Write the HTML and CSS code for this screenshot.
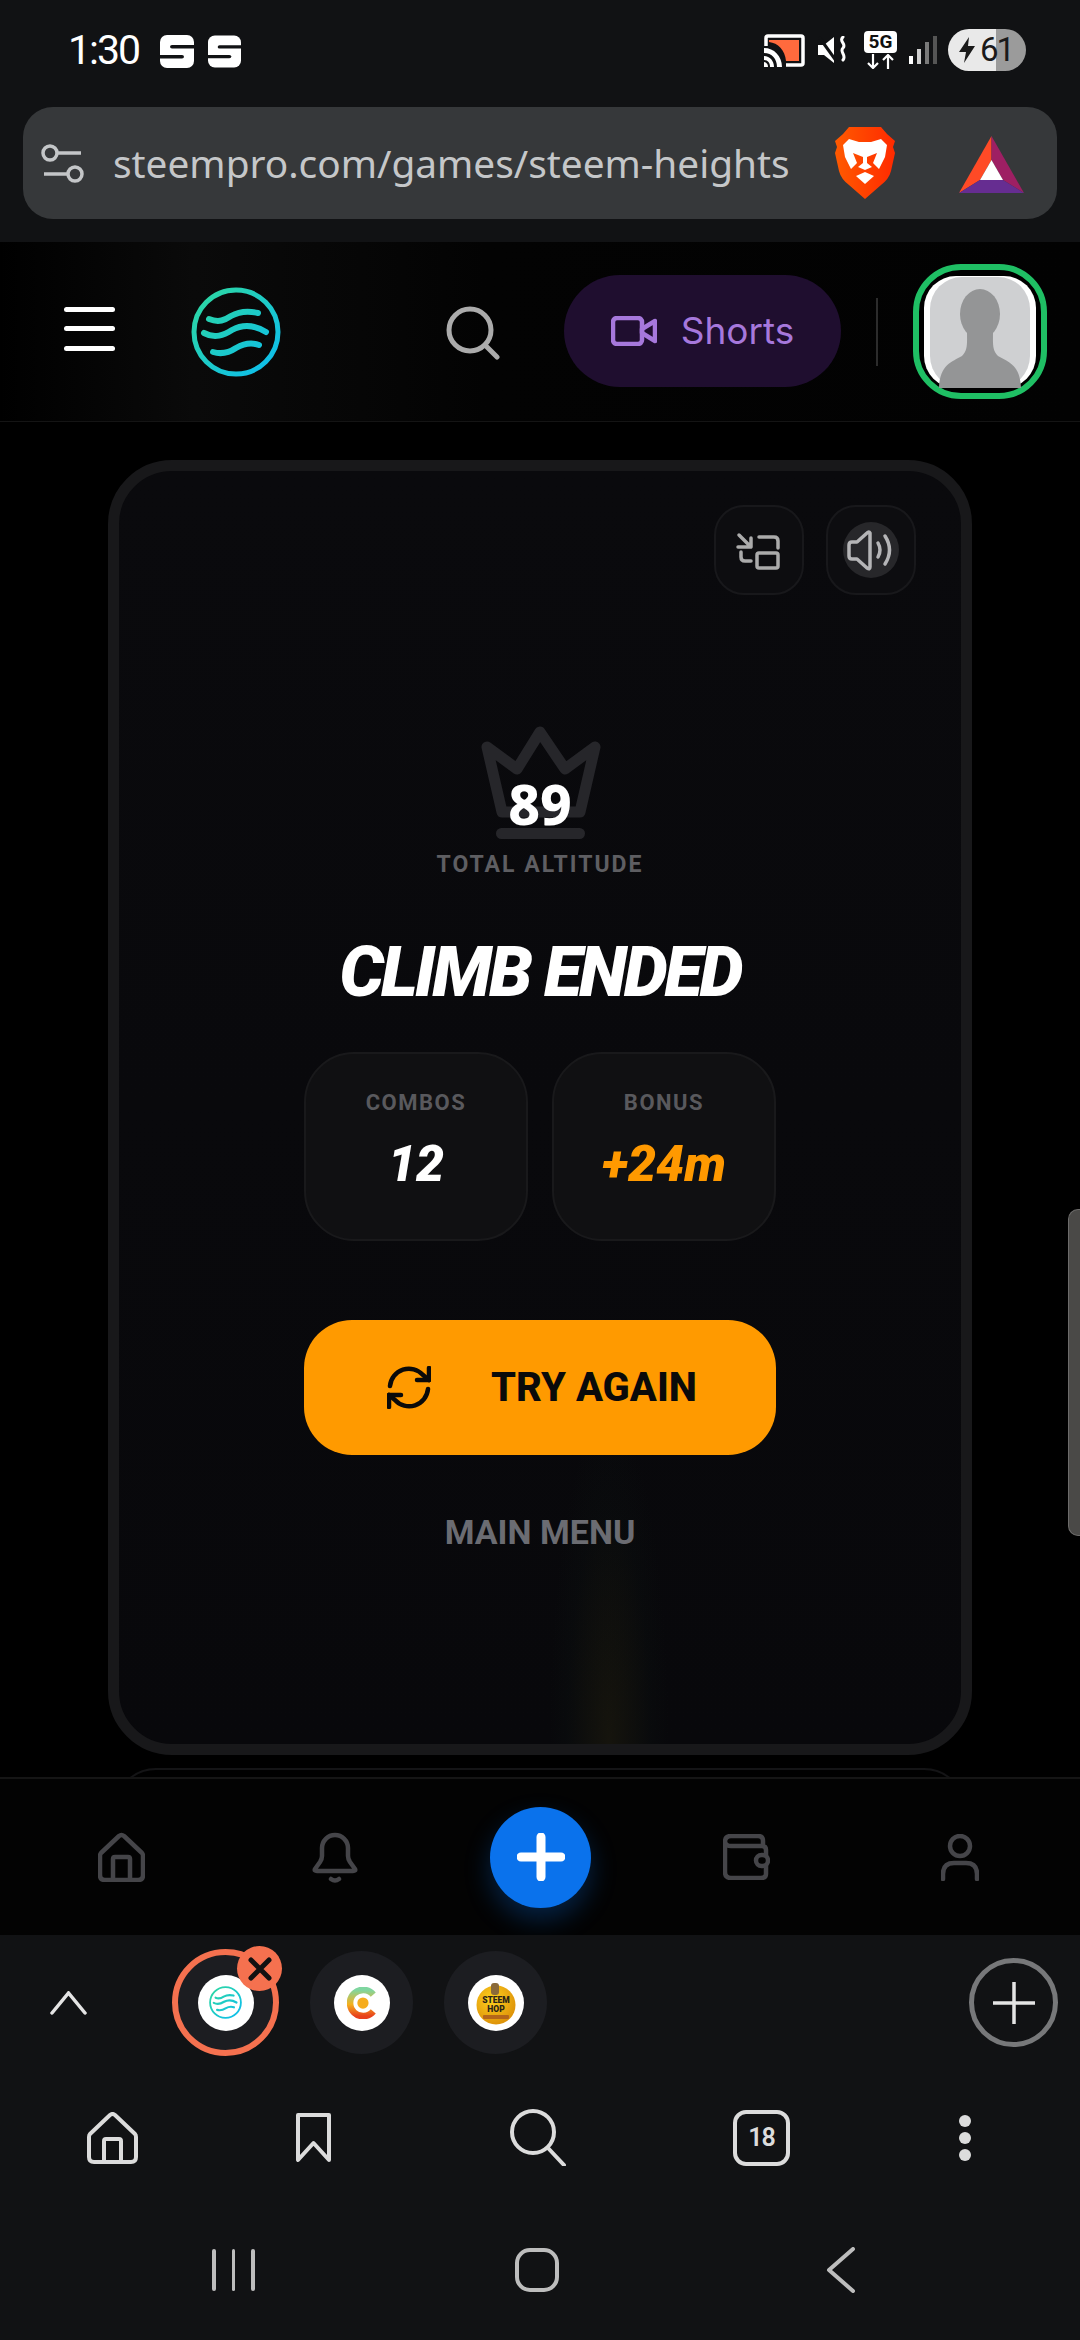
FILE: index.html
```html
<!DOCTYPE html>
<html lang="en">
<head>
<meta charset="utf-8">
<title>Steem Heights</title>
<link rel="stylesheet" href="styles.css">
</head>
<body>
<svg class="defs" width="0" height="0" aria-hidden="true">
  <defs>
    <linearGradient id="tealGradU" gradientUnits="userSpaceOnUse" x1="5" y1="5" x2="85" y2="85">
      <stop offset="0" stop-color="#2ed8a0"/>
      <stop offset="1" stop-color="#0cbdf0"/>
    </linearGradient>
    <linearGradient id="ringGrad" x1="0" y1="0" x2="0" y2="1">
      <stop offset="0" stop-color="#7fd6a0"/>
      <stop offset=".55" stop-color="#f4b11e"/>
      <stop offset="1" stop-color="#e8411c"/>
    </linearGradient>
    <linearGradient id="braveGrad" x1="0" y1="0" x2="1" y2="0">
      <stop offset="0" stop-color="#ff5a00"/>
      <stop offset="1" stop-color="#ff2a00"/>
    </linearGradient>
    <radialGradient id="hopGrad" cx=".4" cy=".35" r=".75">
      <stop offset="0" stop-color="#ffd21f"/>
      <stop offset="1" stop-color="#d98a06"/>
    </radialGradient>
    <symbol id="waveLogo" viewBox="0 0 90 90">
      <circle cx="45" cy="45" r="42" fill="none" stroke="url(#tealGradU)" stroke-width="5"/>
      <g fill="none" stroke="url(#tealGradU)" stroke-width="6" stroke-linecap="round">
        <path d="M18 32C28 36 34 33 40 29C47 25 55 23 67 26"/>
        <path d="M13 46C24 52 33 48 41 43C50 38 62 37 75 45"/>
        <path d="M22 65C32 68 39 65 45 61C52 57 60 55 68 58"/>
      </g>
    </symbol>
    <symbol id="steemS" viewBox="0 0 34 33">
      <rect width="34" height="33" rx="7" fill="#fff"/>
      <path d="M12 10H34V13.500H12Q10 13.500 10 11.750Q10 10 12 10Z" fill="#111214"/>
      <path d="M0 20H22Q24 20 24 21.750Q24 23.500 22 23.500H0Z" fill="#111214"/>
    </symbol>
  </defs>
</svg>

<div class="screen">
  <section class="browser-top">
    <div class="status">
      <span class="clock">1:30</span>
      <svg class="s-badge" width="34" height="33"><use href="#steemS"/></svg>
      <svg class="s-badge s-second" width="33" height="33"><use href="#steemS"/></svg>
      <div class="status-icons">
        <svg class="ic-cast" width="41" height="33" viewBox="0 0 41 33">
          <path d="M2 12V4Q2 2 4 2H37Q39 2 39 4V29Q39 31 37 31H22" fill="none" stroke="#fff" stroke-width="3.500"/>
          <path d="M5 6H35V27H22C21 16 14 9 5 8Z" fill="#ff6a3d"/>
          <path d="M0 14C10 14 18 22 18 33H13C13 25 8 19 0 19ZM0 22C6 22 10 27 10 33H6C6 29 4 26 0 26ZM0 28A5 5 0 0 1 4 33H0Z" fill="#fff"/>
        </svg>
        <svg class="ic-mute" width="30" height="28" viewBox="0 0 30 28">
          <path d="M0 9H6L16 1V27L6 19H0Z" fill="#fff"/>
          <path d="M1 1L19 26" stroke="#111214" stroke-width="3"/>
          <path d="M25 1C20 5 29 8 25 12C21 16 29 19 25 24" fill="none" stroke="#fff" stroke-width="3" stroke-linecap="round"/>
        </svg>
        <div class="ic-net">
          <span class="net-label">5G</span>
          <svg width="33" height="15" viewBox="0 0 33 15">
            <path d="M9 0V14M4 9L9 14L14 9M24 15V1M19 6L24 1L29 6" fill="none" stroke="#fff" stroke-width="2.200"/>
          </svg>
        </div>
        <div class="ic-signal">
          <i class="bar b1"></i><i class="bar b2"></i><i class="bar b3"></i><i class="bar b4"></i>
        </div>
        <div class="battery">
          <svg width="18" height="26" viewBox="0 0 18 26"><path d="M11 0L1 15H8L6 26L17 9H10Z" fill="#1a1a1a"/></svg>
          <span class="batt-num">61</span>
        </div>
      </div>
    </div>
    <div class="urlbar">
      <svg class="url-tune" width="43" height="39" viewBox="0 0 43 39">
        <g fill="none" stroke="#c4c6c8" stroke-width="3.500">
          <circle cx="9" cy="9" r="7"/><path d="M16 9H40"/>
          <circle cx="34" cy="30" r="7"/><path d="M3 30H27"/>
        </g>
      </svg>
      <span class="url-text">steempro.com/games/steem-heights</span>
      <svg class="brave" width="60" height="72" viewBox="0 0 60 72">
        <path d="M14 0H46L52 7L60 14L58 20L60 26L56 44Q54 52 46 58L30 72L14 58Q6 52 4 44L0 26L2 20L0 14L8 7Z" fill="url(#braveGrad)"/>
        <path d="M8 18L14 12L24 15H36L46 12L52 18L50 30L44 42L38 36L42 26L32 30V36L37 40L30 43L23 40L28 36V30L18 26L22 36L16 42L10 30Z" fill="#fff"/>
        <path d="M21 49L30 45L39 49L30 57Z" fill="#fff"/>
      </svg>
      <svg class="bat" width="65" height="57" viewBox="0 0 65 57">
        <path d="M32.500 0L0 57L21 44L32.500 24Z" fill="#ff4a26"/>
        <path d="M32.500 0L65 57L44 44L32.500 24Z" fill="#9e1f63"/>
        <path d="M0 57H65L44 44H21Z" fill="#662d91"/>
        <path d="M32.500 24L44 44H21Z" fill="#fff"/>
      </svg>
    </div>
  </section>

  <header class="app-header">
    <div class="burger"><i></i><i></i><i></i></div>
    <svg class="logo" width="90" height="90"><use href="#waveLogo"/></svg>
    <svg class="head-search" width="54" height="54" viewBox="0 0 54 54">
      <circle cx="24" cy="24" r="21" fill="none" stroke="#ababab" stroke-width="5"/>
      <path d="M39 39L51 51" stroke="#ababab" stroke-width="5" stroke-linecap="round"/>
    </svg>
    <div class="shorts">
      <svg width="46" height="30" viewBox="0 0 46 30">
        <rect x="2" y="2" width="29" height="26" rx="4" fill="none" stroke="#a678dc" stroke-width="4.500"/>
        <path d="M31 13L44 5V25L31 17Z" fill="none" stroke="#a678dc" stroke-width="4.500" stroke-linejoin="round"/>
      </svg>
      <span>Shorts</span>
    </div>
    <i class="divider"></i>
    <div class="avatar">
      <svg width="112" height="112" viewBox="0 0 112 112">
        <rect width="112" height="112" rx="32" fill="#fff"/>
        <rect x="6" y="1" width="100" height="111" rx="32" fill="#cfd0d2"/>
        <ellipse cx="56" cy="38" rx="20" ry="25" fill="#949596"/>
        <path d="M43 55C43 68 44 74 38 80C28 86 16 88 15 112H97C96 88 84 86 74 80C68 74 69 68 69 55Z" fill="#949596"/>
      </svg>
    </div>
  </header>

  <main class="feed">
    <article class="game-card">
      <div class="card-tools">
        <button class="tool">
          <svg width="90" height="90" viewBox="0 0 90 90">
            <g fill="none" stroke="#ababab" stroke-width="3.500" stroke-linecap="round" stroke-linejoin="round">
              <path d="M25 30L37 42M24 42H37V33"/>
              <path d="M45 32H60Q64 32 64 36V43"/>
              <path d="M27 47V52Q27 56 31 56H37"/>
              <rect x="43" y="48" width="21" height="15" rx="2"/>
            </g>
          </svg>
        </button>
        <button class="tool tool-on">
          <svg width="90" height="90" viewBox="0 0 90 90">
            <circle cx="45" cy="45" r="28" fill="#27272a"/>
            <g fill="none" stroke="#b5b5b7" stroke-width="3.500" stroke-linecap="round" stroke-linejoin="round">
              <path d="M44 28Q43 26 41 28L31 37H26Q23 37 23 40V51Q23 54 26 54H31L41 63Q44 65 44 62Z"/>
              <path d="M52 38Q56 45 52 52"/>
              <path d="M59 31Q68 45 59 59"/>
            </g>
          </svg>
        </button>
      </div>

      <div class="score">
        <svg width="123" height="113" viewBox="0 0 123 113">
          <path d="M8 21L38 43L61 6L86 43L116 21L101 86H23Z" fill="none" stroke="#26262a" stroke-width="11" stroke-linejoin="round"/>
          <rect x="17" y="102" width="89" height="11" rx="5.500" fill="#26262a"/>
        </svg>
        <span class="score-num">89</span>
      </div>
      <p class="score-label">TOTAL ALTITUDE</p>
      <h1 class="title">CLIMB ENDED</h1>

      <div class="stats">
        <div class="stat">
          <span class="stat-label">COMBOS</span>
          <span class="stat-value">12</span>
        </div>
        <div class="stat">
          <span class="stat-label">BONUS</span>
          <span class="stat-value orange">+24m</span>
        </div>
      </div>

      <button class="retry">
        <svg width="44" height="43" viewBox="0 0 44 43">
          <g fill="none" stroke="#0a0a0a" stroke-width="4.500" stroke-linecap="round" stroke-linejoin="round">
            <path d="M3 20A19 19 0 0 1 36 9L42 14"/>
            <path d="M42 2V14H30"/>
            <path d="M41 23A19 19 0 0 1 8 34L2 29"/>
            <path d="M2 41V29H14"/>
          </g>
        </svg>
        <span>TRY AGAIN</span>
      </button>
      <a class="menu-link">MAIN MENU</a>
    </article>
    <div class="next-card"></div>
    <div class="scroll-handle"></div>
  </main>

  <nav class="app-nav">
    <svg class="n-home" width="47" height="50" viewBox="0 0 47 50">
      <g fill="none" stroke="#454549" stroke-width="4.500" stroke-linejoin="round">
        <path d="M3 21L21 4Q23.500 2 26 4L44 21Q45 22 45 24V43Q45 48 40 48H7Q2 48 2 43V24Q2 22 3 21Z"/>
        <path d="M15 48V27Q15 25 17 25H30Q32 25 32 27V48"/>
      </g>
    </svg>
    <svg class="n-bell" width="46" height="51" viewBox="0 0 46 51">
      <g fill="none" stroke="#454549" stroke-width="4.500" stroke-linecap="round" stroke-linejoin="round">
        <path d="M3 37Q2 39 5 39H41Q44 39 43 37L38 30Q36 27 36 24V16A13 13 0 0 0 10 16V24Q10 27 8 30Z"/>
        <path d="M19 47Q23 50 27 47"/>
      </g>
    </svg>
    <button class="fab">
      <svg width="48" height="48" viewBox="0 0 48 48"><path d="M24 4V44M4 24H44" stroke="#fff" stroke-width="9" stroke-linecap="round"/></svg>
    </button>
    <svg class="n-wallet" width="47" height="46" viewBox="0 0 47 46">
      <g fill="none" stroke="#454549" stroke-width="4.500" stroke-linejoin="round">
        <path d="M40 12V7Q40 2 35 2H8Q2 2 2 8V38Q2 44 8 44H38Q43 44 43 40V16Q43 12 39 12H8Q3 12 2 8"/>
        <rect x="33" y="21" width="12" height="11" rx="5.500" fill="#030303"/>
      </g>
    </svg>
    <svg class="n-user" width="38" height="47" viewBox="0 0 38 47">
      <g fill="none" stroke="#454549" stroke-width="4.500" stroke-linecap="round">
        <circle cx="19" cy="12" r="10"/>
        <path d="M2 45V40Q2 29 13 29H25Q36 29 36 40V45"/>
      </g>
    </svg>
  </nav>

  <section class="browser-bottom">
    <div class="tabstrip">
      <svg class="chev" width="37" height="24" viewBox="0 0 37 24"><path d="M2 22L18.500 2L35 22" fill="none" stroke="#e4e4e4" stroke-width="3.500" stroke-linecap="round"/></svg>
      <div class="tab tab-active">
        <span class="tab-face"><svg width="33" height="33"><use href="#waveLogo"/></svg></span>
        <span class="tab-close">
          <svg width="24" height="24" viewBox="0 0 24 24"><path d="M3 3L21 21M21 3L3 21" stroke="#111" stroke-width="5" stroke-linecap="round"/></svg>
        </span>
      </div>
      <div class="tab">
        <span class="tab-face">
          <svg width="30" height="32" viewBox="0 0 32 34">
            <path d="M28 8A14 14 0 1 0 28 26" fill="none" stroke="url(#ringGrad)" stroke-width="7"/>
            <circle cx="17" cy="17" r="6" fill="#f6ad1e"/>
          </svg>
        </span>
      </div>
      <div class="tab">
        <span class="tab-face">
          <svg width="40" height="44" viewBox="0 0 40 44">
            <circle cx="20" cy="24" r="19.500" fill="url(#hopGrad)"/>
            <rect x="15" y="2" width="8" height="12" rx="3" fill="#8a6a3a"/>
            <text class="hop-text" x="20" y="22" text-anchor="middle">STEEM</text>
            <text class="hop-text" x="20" y="31" text-anchor="middle">HOP</text>
            <rect x="7" y="34" width="26" height="4" rx="1" fill="#b5661a"/>
          </svg>
        </span>
      </div>
      <div class="tab-add">
        <svg width="42" height="42" viewBox="0 0 42 42"><path d="M21 0V42M0 21H42" stroke="#e4e4e4" stroke-width="3.500"/></svg>
      </div>
    </div>

    <div class="toolbar">
      <svg class="t-home" width="51" height="52" viewBox="0 0 51 52">
        <g fill="none" stroke="#dcdcdc" stroke-width="4" stroke-linejoin="round">
          <path d="M3 22L23 3Q25.500 1 28 3L48 22Q49 23 49 25V45Q49 50 44 50H7Q2 50 2 45V25Q2 23 3 22Z"/>
          <path d="M17 50V29Q17 27 19 27H32Q34 27 34 29V50"/>
        </g>
      </svg>
      <svg class="t-mark" width="35" height="50" viewBox="0 0 35 50">
        <path d="M2 2H33V47L17.500 30L2 47Z" fill="none" stroke="#dcdcdc" stroke-width="4" stroke-linejoin="round"/>
      </svg>
      <svg class="t-search" width="56" height="57" viewBox="0 0 56 57">
        <circle cx="23" cy="23" r="21" fill="none" stroke="#dcdcdc" stroke-width="4"/>
        <path d="M38 39L54 56" stroke="#dcdcdc" stroke-width="4" stroke-linecap="round"/>
      </svg>
      <span class="t-count">18</span>
      <span class="t-dots"><i></i><i></i><i></i></span>
    </div>

    <div class="sysnav">
      <span class="sys-recent"><i></i><i></i><i></i></span>
      <span class="sys-home"></span>
      <svg class="sys-back" width="30" height="46" viewBox="0 0 30 46"><path d="M27 2L3 23L27 44" fill="none" stroke="#bdbdbd" stroke-width="4" stroke-linecap="round" stroke-linejoin="round"/></svg>
    </div>
  </section>
</div>
</body>
</html>
```

FILE: styles.css
```css
* { box-sizing: border-box; }
html, body { margin: 0; padding: 0; background: #000; }
.defs { position: absolute; }
i { display: block; }
svg { display: block; flex: none; }
button { border: 0; padding: 0; background: none; font: inherit; }

.screen {
  width: 1080px;
  height: 2340px;
  display: flex;
  flex-direction: column;
  overflow: hidden;
  font-family: Roboto, "Liberation Sans", sans-serif;
  position: relative;
}

/* browser chrome, top */
.browser-top { height: 242px; background: #111214; flex: none; }
.status {
  height: 107px;
  padding: 0 54px 7px 68px;
  display: flex;
  align-items: center;
  color: #fff;
}
.clock { font-size: 41px; font-weight: 400; letter-spacing: -2px; width: 92px; }
.s-badge { margin-top: 3px; }
.s-second { margin-left: 14px; }
.status-icons { margin-left: auto; display: flex; align-items: center; }
.ic-cast { margin-right: 13px; }
.ic-mute { margin-right: 16px; }
.ic-net { width: 33px; margin-right: 12px; }
.net-label {
  display: block;
  height: 22px;
  border-radius: 4px;
  background: #fff;
  color: #111;
  font-size: 19px;
  font-weight: 700;
  line-height: 22px;
  text-align: center;
  margin-bottom: 1px;
}
.ic-signal { display: flex; align-items: flex-end; gap: 4px; height: 28px; width: 28px; margin-right: 11px; }
.bar { width: 4px; }
.b1 { height: 8px; background: #fff; }
.b2 { height: 15px; background: #cfcfcf; }
.b3 { height: 22px; background: #7a7a7a; }
.b4 { height: 28px; background: #555; }
.battery {
  width: 78px;
  height: 42px;
  border-radius: 21px;
  background: linear-gradient(90deg, #e9e9e9 0 61.500%, #9b9b9b 61.500% 100%);
  display: flex;
  align-items: center;
  padding-left: 10px;
  gap: 4px;
}
.batt-num { font-size: 33px; color: #1a1a1a; letter-spacing: -2px; line-height: 42px; }

.urlbar {
  height: 112px;
  margin: 0 23px;
  padding: 0 33px 0 18px;
  border-radius: 30px;
  background: #36383a;
  display: flex;
  align-items: center;
}
.url-text {
  margin-left: 29px;
  font-family: "Noto Sans", sans-serif;
  font-size: 38.800px;
  color: #c5c7c9;
  white-space: nowrap;
}
.brave { margin-left: auto; margin-right: -1px; }
.bat { margin-left: 65px; margin-top: 3px; }

/* site header */
.app-header {
  height: 180px;
  flex: none;
  background: linear-gradient(90deg, #000 0, #0a0a0a 18%, #030303 45%, #020202 100%);
  border-bottom: 1px solid #141414;
  display: flex;
  align-items: center;
  padding-left: 64px;
}
.burger { width: 51px; display: flex; flex-direction: column; gap: 14.500px; margin-bottom: 6px; }
.burger i { height: 5px; border-radius: 3px; background: #fff; }
.logo { margin-left: 76px; }
.head-search { margin-left: 165px; margin-top: 2px; }
.shorts {
  margin-left: 64px;
  margin-bottom: 2px;
  width: 277px;
  height: 112px;
  border-radius: 56px;
  background: #1f0e2f;
  color: #a678dc;
  font-family: Inter, sans-serif;
  font-size: 37px;
  display: flex;
  align-items: center;
  justify-content: center;
  gap: 24px;
}
.divider { margin-left: 35px; width: 2px; height: 68px; background: #2c2c2c; }
.avatar {
  margin-left: 35px;
  width: 134px;
  height: 135px;
  border-radius: 48px;
  border: 6px solid #1fbf64;
  display: flex;
  align-items: center;
  justify-content: center;
  background: #000;
}

/* feed */
.feed {
  height: 1355px;
  flex: none;
  background: #000;
  overflow: hidden;
  padding: 38px 108px 0;
  position: relative;
}
.game-card {
  height: 1295px;
  border: 11px solid #18181a;
  border-radius: 64px;
  background:
    radial-gradient(ellipse 60px 330px at 490px 100%, rgba(105, 95, 25, .14), rgba(30, 60, 40, .05) 70%, transparent 100%),
    linear-gradient(180deg, #0a0a0d 0, #08080b 100%);
  display: flex;
  flex-direction: column;
  align-items: center;
  padding-top: 34px;
}
.card-tools { align-self: flex-end; display: flex; gap: 22px; margin-right: 45px; }
.tool {
  width: 90px;
  height: 90px;
  border-radius: 30px;
  border: 2px solid #18181b;
  background: #0d0d10;
  display: flex;
  align-items: center;
  justify-content: center;
}
.tool svg { margin: -2px; }
.score { position: relative; margin-top: 131px; width: 123px; height: 113px; }
.score-num {
  position: absolute;
  left: 0;
  right: 0;
  top: 48px;
  text-align: center;
  font-family: "Noto Sans", sans-serif;
  font-size: 55px;
  font-weight: 800;
  line-height: 60px;
  color: #fff;
}
.score-label {
  margin: 11px 0 0;
  font-size: 23px;
  font-weight: 700;
  line-height: 30px;
  letter-spacing: 2px;
  color: #5e5e62;
}
.title {
  margin: 52px 0 0;
  font-size: 70px;
  font-weight: 900;
  font-style: italic;
  line-height: 80px;
  letter-spacing: -3px;
  color: #fff;
}
.stats { margin-top: 40px; display: flex; gap: 24px; }
.stat {
  width: 224px;
  height: 189px;
  border-radius: 50px;
  border: 2px solid #19191b;
  background: #101012;
  display: flex;
  flex-direction: column;
  align-items: center;
  padding-top: 35px;
}
.stat-label {
  font-size: 22px;
  font-weight: 700;
  line-height: 28px;
  letter-spacing: 1.500px;
  color: #59595d;
}
.stat-value {
  margin-top: 17px;
  font-size: 50px;
  font-weight: 900;
  font-style: italic;
  line-height: 60px;
  color: #fff;
}
.orange { color: #ff9900; }
.retry {
  margin-top: 79px;
  width: 472px;
  height: 135px;
  border-radius: 48px;
  background: #ff9a00;
  color: #0a0a0a;
  font-family: Roboto, sans-serif;
  font-size: 40px;
  font-weight: 800;
  display: flex;
  align-items: center;
  justify-content: center;
  gap: 60px;
  padding-left: 4px;
}
.menu-link {
  margin-top: 57px;
  font-size: 34px;
  font-weight: 700;
  line-height: 40px;
  color: #6b6c72;
}
.next-card {
  height: 60px;
  margin: 13px 6px 0;
  border: 2px solid #141416;
  border-radius: 42px 42px 0 0;
}
.scroll-handle {
  position: absolute;
  right: 0;
  top: 787px;
  width: 12px;
  height: 327px;
  background: #4a4947;
  border: 1px solid #6c6b6a;
  border-right: 0;
  border-radius: 10px 0 0 10px;
}

/* site bottom nav */
.app-nav {
  height: 158px;
  flex: none;
  background: #030303;
  border-top: 2px solid #151515;
  display: flex;
  align-items: center;
  padding-left: 98px;
  overflow: hidden;
}
.n-bell { margin-left: 167px; }
.fab {
  margin-left: 132px;
  width: 101px;
  height: 101px;
  border-radius: 50%;
  background: #0a72ec;
  box-shadow: 0 12px 26px rgba(10, 114, 236, .28);
  display: flex;
  align-items: center;
  justify-content: center;
}
.n-wallet { margin-left: 132px; }
.n-user { margin-left: 171px; }

/* browser chrome, bottom */
.browser-bottom { flex: 1; background: #111214; }
.tabstrip {
  height: 135px;
  display: flex;
  align-items: center;
  gap: 31px;
  padding: 0 22px 0 50px;
}
.chev { margin-right: 54px; }
.tab {
  position: relative;
  width: 103px;
  height: 103px;
  border-radius: 50%;
  background: #1c1d21;
  display: flex;
  align-items: center;
  justify-content: center;
}
.tab-active {
  width: 107px;
  height: 107px;
  border: 6px solid #f5714f;
}
.tab-face {
  width: 56px;
  height: 56px;
  border-radius: 50%;
  background: #fff;
  display: flex;
  align-items: center;
  justify-content: center;
}
.tab-close {
  position: absolute;
  left: 59px;
  top: -9px;
  width: 45px;
  height: 45px;
  border-radius: 50%;
  background: #f5714f;
  display: flex;
  align-items: center;
  justify-content: center;
}
.hop-text { font-family: Roboto, sans-serif; font-size: 8.500px; font-weight: 900; fill: #2a2416; }
.tab-add {
  margin-left: auto;
  width: 89px;
  height: 89px;
  border-radius: 50%;
  border: 5px solid #77787a;
  display: flex;
  align-items: center;
  justify-content: center;
}

.toolbar {
  height: 135px;
  display: flex;
  align-items: center;
  padding-left: 87px;
}
.t-mark { margin-left: 158px; }
.t-search { margin-left: 179px; }
.t-count {
  margin-left: 167px;
  width: 57px;
  height: 56px;
  border: 4.500px solid #dcdcdc;
  border-radius: 13px;
  color: #dcdcdc;
  font-family: Roboto, sans-serif;
  font-size: 25px;
  font-weight: 600;
  line-height: 47px;
  text-align: center;
  letter-spacing: -1px;
}
.t-dots { margin-left: 169px; display: flex; flex-direction: column; gap: 5px; }
.t-dots i { width: 12px; height: 12px; border-radius: 50%; background: #dcdcdc; }

.sysnav { height: 130px; display: flex; align-items: center; padding-left: 212px; }
.sys-recent { display: flex; gap: 16px; }
.sys-recent i { width: 3.500px; height: 42px; background: #bdbdbd; border-radius: 2px; }
.sys-home {
  margin-left: 260px;
  width: 44px;
  height: 44px;
  border: 4px solid #bdbdbd;
  border-radius: 15px;
}
.sys-back { margin-left: 267px; }
```
